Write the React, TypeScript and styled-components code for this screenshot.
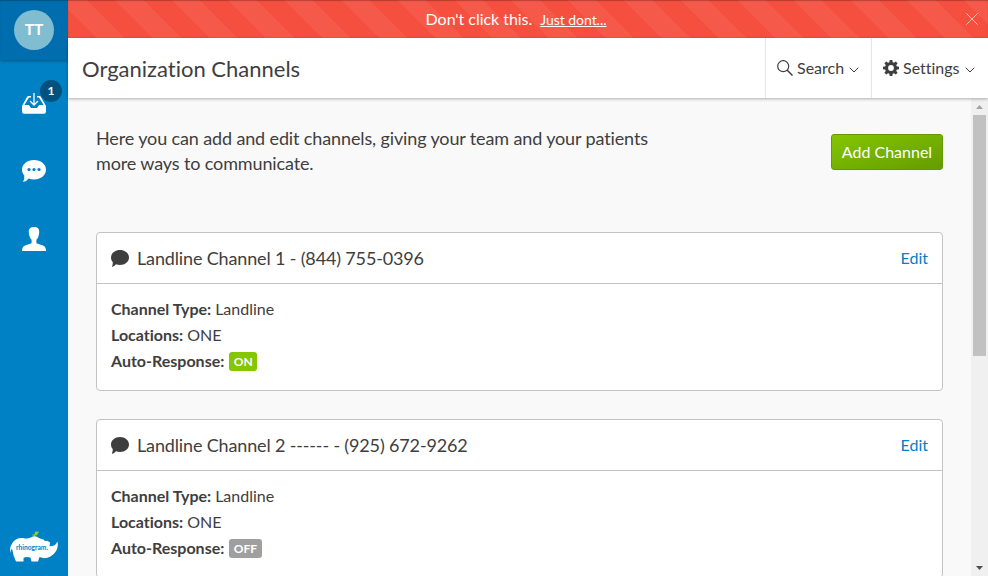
import React from 'react';
import styled, { createGlobalStyle } from 'styled-components';

const GlobalStyle = createGlobalStyle`
  *, *::before, *::after { box-sizing: border-box; }
  html, body { margin: 0; height: 100%; overflow: hidden; }
  body { font-family: Lato, sans-serif; font-size: 16px; font-variant-ligatures: none; color: #3e3e3e; background: #f9f9f9; }
  button { font: inherit; font-variant-ligatures: none; color: inherit; border: 0; background: none; padding: 0; cursor: pointer; }
  svg { display: block; flex: none; }
`;

const Shell = styled.div`
  display: flex;
  height: 100vh;
  overflow: hidden;
`;

const Sidebar = styled.nav`
  width: 68px;
  flex: none;
  display: flex;
  flex-direction: column;
  background: #0081c6;
`;

const Profile = styled.div`
  height: 60px;
  display: flex;
  justify-content: center;
  padding-top: 10px;
  background: #006eae;
  box-shadow: 0 1px 3px rgba(0, 0, 0, 0.35), inset 0 1px 1px rgba(0, 0, 0, 0.25);
`;

const Avatar = styled.div`
  width: 40px;
  height: 40px;
  border-radius: 50%;
  background: #80bdd1;
  color: #fff;
  font-size: 15.5px;
  font-weight: 700;
  line-height: 39px;
  text-align: center;
`;

const NavItem = styled.button`
  position: relative;
  height: 68px;
  display: flex;
  align-items: center;
  justify-content: center;
  color: #fff;
`;

const NavList = styled.div`
  display: flex;
  flex-direction: column;
  padding-top: 9px;
  flex: 1;
`;

const Count = styled.span`
  position: absolute;
  left: 40px;
  top: 11px;
  width: 22px;
  height: 22px;
  border-radius: 50%;
  background: #00517d;
  font-size: 12px;
  font-weight: 700;
  line-height: 22px;
  text-align: center;
`;

const Brand = styled.div`
  padding: 0 0 12px 9px;
`;

const Main = styled.main`
  flex: 1;
  min-width: 0;
  display: flex;
  flex-direction: column;
`;

const Banner = styled.div`
  height: 38px;
  flex: none;
  display: flex;
  align-items: center;
  color: #fff;
  background-color: #f44f3f;
  background-image: repeating-linear-gradient(45deg, transparent 0, transparent 20px, rgba(255,255,255,.06) 20px, rgba(255,255,255,.06) 40px);
  box-shadow: inset 0 1px 1px rgba(0, 0, 0, 0.25);
`;

const BannerText = styled.p`
  flex: 1;
  margin: 0;
  padding: 0 0 2px 8px;
  text-align: center;
  letter-spacing: -0.04px;
`;

const BannerLink = styled.a`
  margin-left: 4px;
  font-size: 14px;
  text-decoration: underline;
`;

const CloseButton = styled.button`
  width: 32px;
  display: flex;
  justify-content: center;
`;

const Header = styled.header`
  height: 60px;
  flex: none;
  display: flex;
  background: #fff;
  position: relative;
  box-shadow: 0 1px 3px rgba(0, 0, 0, 0.3);
`;

const Title = styled.h1`
  flex: 1;
  margin: 0;
  padding-left: 14px;
  font-size: 22px;
  font-weight: 400;
  line-height: 62px;
`;

const HeaderButton = styled.button<{ $width: number }>`
  width: ${({ $width }) => $width}px;
  display: flex;
  align-items: center;
  padding-left: 11px;
  border-left: 1px solid #e6e6e6;
  white-space: nowrap;

  & > svg:last-child {
    margin-top: 3px;
  }
`;

const ButtonLabel = styled.span`
  margin: 0 5px 0 4px;
  padding-bottom: 1px;
`;

const Viewport = styled.div`
  flex: 1;
  min-height: 0;
  display: flex;
`;

const Content = styled.div`
  flex: 1;
  overflow: hidden;
  padding: 28px 28px 0;
`;

const Intro = styled.div`
  display: flex;
  justify-content: space-between;
  height: 106px;
`;

const IntroText = styled.p`
  width: 580px;
  margin: 0;
  font-size: 18px;
  line-height: 25px;
  letter-spacing: -0.13px;
`;

const AddButton = styled.button`
  width: 112px;
  height: 36px;
  margin-top: 8px;
  padding-bottom: 2px;
  border: 1px solid #659900;
  border-radius: 3px;
  background: linear-gradient(to bottom right, #84c600, #659c00);
  color: #fff;
`;

const Card = styled.section`
  height: 159px;
  margin-bottom: 28px;
  border: 1px solid #c3c3c3;
  border-radius: 4px;
  background: #fff;
`;

const CardHeader = styled.div`
  height: 51px;
  display: flex;
  align-items: center;
  padding: 0 14px;
  border-bottom: 1px solid #c3c3c3;
`;

const CardTitle = styled.h2`
  flex: 1;
  margin: 0 0 0 8px;
  font-size: 18px;
  font-weight: 400;
  line-height: 26px;
  letter-spacing: -0.15px;
`;

const EditLink = styled.a`
  padding-bottom: 2px;
  color: #0081c6;
`;

const Details = styled.dl`
  margin: 0;
  padding: 12px 14px;
`;

const Detail = styled.div`
  display: flex;
  align-items: center;
  height: 26px;
`;

const Term = styled.dt`
  margin-right: 4px;
  padding-bottom: 2px;
  font-weight: 700;
`;

const Value = styled.dd`
  margin: 0;
  padding-bottom: 2px;
`;

const Status = styled.dd<{ $on: boolean }>`
  height: 19px;
  margin: 0 0 0 1px;
  padding: 0 4.5px;
  border-radius: 3px;
  background: ${({ $on }) => ($on ? '#84c600' : '#9f9f9f')};
  color: #fff;
  font-size: 12px;
  font-weight: 700;
  line-height: 19px;
`;

const ScrollTrack = styled.div`
  width: 17px;
  flex: none;
  display: flex;
  flex-direction: column;
  align-items: center;
  background: #f0f0f0;
`;

const ScrollThumb = styled.div`
  width: 13px;
  height: 241px;
  background: #c1c1c1;
`;

const ScrollArrow = styled.div`
  height: 17px;
  display: flex;
  align-items: center;
`;

const Spacer = styled.div`
  flex: 1;
`;

const InboxIcon = () => (
  <svg width="24" height="22" viewBox="0 0 24 22">
    <path fill="currentColor" d="M0 14 5.2 4.7Q5.6 4 6.5 4H9V5.5H7L2.4 13H6.8L9 16H15L17.2 13H21.6L17 5.5H15V4H17.5Q18.4 4 18.8 4.7L24 14V19.7Q24 21.7 22 21.7H2Q0 21.7 0 19.7Z" />
    <path fill="none" stroke="currentColor" strokeWidth="1.3" d="M12 1V13M8 9 12 13 16 9" />
  </svg>
);

const MessageIcon = () => (
  <svg width="24" height="22" viewBox="0 0 24 22">
    <path fill="currentColor" d="M12 0C18.7 0 24 4.2 24 9.7S18.7 19.4 12 19.4C10 19.4 8.2 19.1 6.7 18.4Q4.7 21.2 1 22Q2.8 18.6 2.3 15.5C.8 13.9 0 11.9 0 9.7 0 4.2 5.3 0 12 0Z" />
    <g fill="#0081c6"><circle cx="7" cy="9.5" r="1.6" /><circle cx="12" cy="9.5" r="1.6" /><circle cx="17" cy="9.5" r="1.6" /></g>
  </svg>
);

const PersonIcon = () => (
  <svg width="24" height="24" viewBox="0 0 24 24">
    <path fill="currentColor" d="M12 0C15.5 0 17.5 1.6 17.2 5.2 17 8.5 16 11.3 14.4 12.8V16.3L21 18.6Q24 19.7 24 24H0Q0 19.7 3 18.6L9.6 16.3V12.8C8 11.3 7 8.5 6.8 5.2 6.5 1.6 8.5 0 12 0Z" />
  </svg>
);

const RhinoLogo = () => (
  <svg width="50" height="34" viewBox="0 0 50 34">
    <path fill="#9fcb22" d="M22.5 4.5Q25.5 5 26 3.5L25.8 2 27.3 1.2 27.7 2.3 29.8.7Q29.3 5.3 26 5.5L25.5 7.2 24.9 5.8Q23.6 5.8 22.5 4.5Z" />
    <path fill="#fff" d="M1.3 23Q0 17 4 12Q8 7.2 14 8Q18 9.2 22 7.6Q26 4.8 30 8Q32.8 9.5 34.8 9.4Q35.2 11.5 38 10.8L41 12.2 40.6 16Q46 17 48.4 11.5 50.5 21 41.5 26.5 36 29.5 30.5 27L29 31.5H22.5L21.5 27.6Q17 26.3 14.5 28V31.5H7L4.6 25.5 3 18.5Q1.5 19.5 1.3 23Z" />
    <text x="7" y="20" fill="#0081c6" fontFamily="Lato, sans-serif" fontSize="7.4" fontWeight="700" textLength="32" lengthAdjust="spacingAndGlyphs">rhinogram.</text>
  </svg>
);

const SearchIcon = () => (
  <svg width="16" height="16" viewBox="0 0 16 16" fill="none" stroke="#3e3e3e">
    <circle cx="6.2" cy="6.2" r="5.5" strokeWidth="1.2" /><path d="M10.2 10.2 15.5 15.5" strokeWidth="1.5" />
  </svg>
);

const GearIcon = () => (
  <svg width="16" height="16" viewBox="0 0 16 16">
    <g fill="#3e3e3e">
      {[0, 45, 90, 135].map((angle) => (
        <path key={angle} transform={`rotate(${angle} 8 8)`} d="M6.7 0H9.3L9.8 3V13L9.3 16H6.7L6.2 13V3Z" />
      ))}
      <circle cx="8" cy="8" r="6" />
    </g>
    <circle cx="8" cy="8" r="2.9" fill="#fff" />
  </svg>
);

const Chevron = () => (
  <svg width="10" height="6" viewBox="0 0 10 6" fill="none" stroke="#3e3e3e">
    <path d="M.7 .7 5 5 9.3 .7" />
  </svg>
);

const BubbleIcon = () => (
  <svg width="18" height="17" viewBox="0 0 18 17">
    <path fill="#3e3e3e" d="M9 0C14 0 18 3.3 18 7.5S14 15 9 15C7.5 15 6.2 14.7 5 14.3Q3.5 16.4.8 17Q2.1 14.3 1.7 12C.6 10.8 0 9.2 0 7.5 0 3.3 4 0 9 0Z" />
  </svg>
);

const channels = [
  { name: 'Landline Channel 1 - (844) 755-0396', type: 'Landline', location: 'ONE', on: true },
  { name: 'Landline Channel 2 ------ - (925) 672-9262', type: 'Landline', location: 'ONE', on: false },
];

export default function App() {
  return (
    <>
      <GlobalStyle />
      <Shell>
        <Sidebar>
          <Profile><Avatar>TT</Avatar></Profile>
          <NavList>
            <NavItem aria-label="Inbox"><InboxIcon /><Count>1</Count></NavItem>
            <NavItem aria-label="Messages"><MessageIcon /></NavItem>
            <NavItem aria-label="Contacts"><PersonIcon /></NavItem>
          </NavList>
          <Brand><RhinoLogo /></Brand>
        </Sidebar>
        <Main>
          <Banner>
            <BannerText>Don't click this. <BannerLink>Just dont...</BannerLink></BannerText>
            <CloseButton aria-label="Close">
              <svg width="12" height="12" viewBox="0 0 12 12" stroke="#fff" strokeOpacity=".65">
                <path d="M.4 .4 11.6 11.6M11.6 .4 .4 11.6" />
              </svg>
            </CloseButton>
          </Banner>
          <Header>
            <Title>Organization Channels</Title>
            <HeaderButton $width={106}><SearchIcon /><ButtonLabel>Search</ButtonLabel><Chevron /></HeaderButton>
            <HeaderButton $width={117}><GearIcon /><ButtonLabel>Settings</ButtonLabel><Chevron /></HeaderButton>
          </Header>
          <Viewport>
            <Content>
              <Intro>
                <IntroText>Here you can add and edit channels, giving your team and your patients more ways to communicate.</IntroText>
                <AddButton>Add Channel</AddButton>
              </Intro>
              {channels.map((channel) => (
                <Card key={channel.name}>
                  <CardHeader>
                    <BubbleIcon />
                    <CardTitle>{channel.name}</CardTitle>
                    <EditLink>Edit</EditLink>
                  </CardHeader>
                  <Details>
                    <Detail><Term>Channel Type:</Term><Value>{channel.type}</Value></Detail>
                    <Detail><Term>Locations:</Term><Value>{channel.location}</Value></Detail>
                    <Detail><Term>Auto-Response:</Term><Status $on={channel.on}>{channel.on ? 'ON' : 'OFF'}</Status></Detail>
                  </Details>
                </Card>
              ))}
            </Content>
            <ScrollTrack>
              <ScrollArrow><svg width="7" height="4" viewBox="0 0 7 4"><path fill="#a3a3a3" d="M0 4 3.5 0 7 4Z" /></svg></ScrollArrow>
              <ScrollThumb />
              <Spacer />
              <ScrollArrow><svg width="7" height="4" viewBox="0 0 7 4"><path fill="#505050" d="M0 0H7L3.5 4Z" /></svg></ScrollArrow>
            </ScrollTrack>
          </Viewport>
        </Main>
      </Shell>
    </>
  );
}
